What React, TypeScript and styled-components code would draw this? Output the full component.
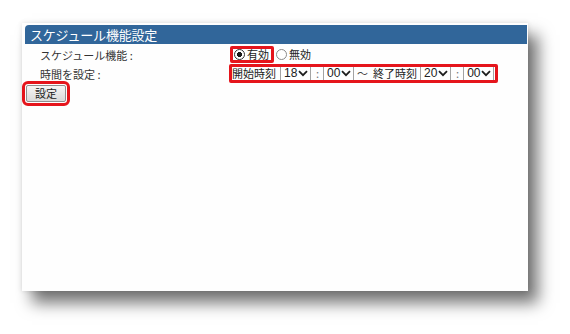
import React from "react";
import styled, { createGlobalStyle } from "styled-components";

const Global = createGlobalStyle`
  html, body { margin: 0; padding: 0; background: #ffffff; }
  body { font-family: "Noto Sans CJK JP", "Liberation Sans", sans-serif; }
`;

const Page = styled.div`
  padding: 23px 0 0 22px;
  width: 570px;
  height: 334px;
  box-sizing: border-box;
`;

const Card = styled.div`
  width: 506px;
  height: 268px;
  box-sizing: border-box;
  background: #fefefe;
  padding: 2px 1px 0 3px;
  box-shadow: 0 0 5px rgba(0, 0, 0, 0.12), 10px 12px 15px rgba(0, 0, 0, 0.55);
`;

const Header = styled.div`
  height: 19px;
  background: #31669a;
  border-radius: 4px 0 0 0;
  color: #ffffff;
  font-size: 13px;
  line-height: 19px;
  padding-left: 5px;
  letter-spacing: -0.2px;
`;

const Form = styled.div`
  display: grid;
  grid-template-columns: 189px 1fr;
  padding-left: 15px;
  margin-top: 1px;
  font-size: 11px;
  color: #333;
`;

const Label = styled.div<{ $h: number }>`
  height: ${(p) => p.$h}px;
  display: flex;
  align-items: center;
`;

const Value = styled.div<{ $h: number }>`
  height: ${(p) => p.$h}px;
  display: flex;
  align-items: center;
`;

const Highlight = styled.span<{ $ml: number; $h: number; $vin: number }>`
  position: relative;
  display: inline-flex;
  align-items: center;
  height: ${(p) => p.$h}px;
  margin-left: ${(p) => p.$ml}px;
  &::after {
    content: "";
    position: absolute;
    left: -3px;
    right: -3px;
    top: ${(p) => -p.$vin}px;
    bottom: ${(p) => -p.$vin}px;
    border: 3px solid #e5151c;
    border-radius: 2px;
    pointer-events: none;
    z-index: 3;
  }
`;

const Radio = styled.input.attrs({ type: "radio" })`
  appearance: none;
  width: 11px;
  height: 11px;
  margin: 0 2px 0 0;
  border: 1px solid #8a8a8a;
  border-radius: 50%;
  box-sizing: border-box;
  background: #fff;
  &:checked {
    border-color: #333;
    background: radial-gradient(circle, #1a1a1a 0 2.3px, #fff 2.8px);
  }
`;

const RadioLabel = styled.label<{ $ml?: number }>`
  display: inline-flex;
  align-items: center;
  margin-left: ${(p) => p.$ml ?? 0}px;
  color: #222;
  line-height: 13px;
`;

const Text = styled.span<{ $ml?: number; $mr?: number; $color?: string }>`
  margin-left: ${(p) => p.$ml ?? 0}px;
  margin-right: ${(p) => p.$mr ?? 0}px;
  color: ${(p) => p.$color ?? "#222"};
  line-height: 13px;
  white-space: nowrap;
`;

const SelectWrap = styled.span`
  position: relative;
  display: inline-flex;
  width: 31px;
  height: 15px;
`;

const NativeSelect = styled.select`
  appearance: none;
  -webkit-appearance: none;
  width: 31px;
  height: 15px;
  box-sizing: border-box;
  border: 1px solid #a3a3a3;
  border-radius: 0;
  background: #fff;
  font-family: "Liberation Sans", Arial, sans-serif;
  font-size: 12px;
  color: #222;
  padding: 0 0 0 3px;
  margin: 0;
  line-height: 13px;
  outline: none;
`;

const Chevron = styled.svg`
  position: absolute;
  right: 3px;
  top: 4px;
  z-index: 1;
  pointer-events: none;
`;

const Select: React.FC<{ value: string; options: string[] }> = ({ value, options }) => (
  <SelectWrap>
    <NativeSelect defaultValue={value}>
      {options.map((o) => (
        <option key={o}>{o}</option>
      ))}
    </NativeSelect>
    <Chevron width="10" height="7" viewBox="0 0 10 7">
      <path d="M1 1.2 L5 5.2 L9 1.2" fill="none" stroke="#1e1e1e" strokeWidth="1.8" />
    </Chevron>
  </SelectWrap>
);

const ButtonRow = styled.div`
  display: flex;
  padding: 2px 0 0 1px;
`;

const Button = styled.button`
  width: 40px;
  height: 17px;
  box-sizing: border-box;
  border: 1px solid #8f8f8f;
  border-radius: 2px;
  background: linear-gradient(#f6f6f6, #dadada);
  font-family: "Noto Sans CJK JP", sans-serif;
  font-size: 11px;
  color: #222;
  line-height: 13px;
  padding: 0;
  outline: 3px solid #e5151c;
  outline-offset: 1px;
`;

const hours = Array.from({ length: 24 }, (_, i) => String(i).padStart(2, "0"));
const mins = ["00", "10", "20", "30", "40", "50"];

export default function App() {
  return (
    <Page>
      <Global />
      <Card>
        <Header>スケジュール機能設定</Header>
        <Form>
          <Label $h={19}>スケジュール機能 :</Label>
          <Value $h={19}>
            <Highlight $ml={4} $h={13} $vin={2}>
              <RadioLabel $ml={1}>
                <Radio name="sch" defaultChecked />
                有効
              </RadioLabel>
              <Text $mr={2} />
            </Highlight>
            <RadioLabel $ml={5}>
              <Radio name="sch" />
              無効
            </RadioLabel>
          </Value>
          <Label $h={19}>時間を設定 :</Label>
          <Value $h={19}>
            <Highlight $ml={3} $h={15} $vin={2}>
              <Text $mr={4}>開始時刻</Text>
              <Select value="18" options={hours} />
              <Text $ml={5} $mr={4} $color="#777">:</Text>
              <Select value="00" options={mins} />
              <Text $ml={3} $mr={5} $color="#444">～</Text>
              <Text $mr={3}>終了時刻</Text>
              <Select value="20" options={hours} />
              <Text $ml={5} $mr={4} $color="#777">:</Text>
              <Select value="00" options={mins} />
              <Text $mr={1} />
            </Highlight>
          </Value>
        </Form>
        <ButtonRow>
          <Button>設定</Button>
        </ButtonRow>
      </Card>
    </Page>
  );
}
